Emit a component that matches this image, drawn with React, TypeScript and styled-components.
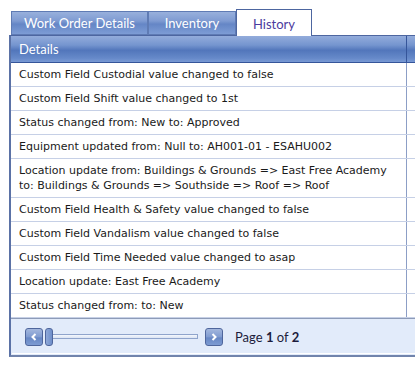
import React from 'react';
import styled, { createGlobalStyle } from 'styled-components';

const GlobalStyle = createGlobalStyle`
    html, body {
        margin: 0;
        padding: 0;
        background: #ffffff;
        overflow: hidden;
    }
`;

const rows: string[][] = [
    ['Custom Field Custodial value changed to false'],
    ['Custom Field Shift value changed to 1st'],
    ['Status changed from: New to: Approved'],
    ['Equipment updated from: Null to: AH001-01 - ESAHU002'],
    [
        'Location update from: Buildings & Grounds => East Free Academy',
        'to: Buildings & Grounds => Southside => Roof => Roof',
    ],
    ['Custom Field Health & Safety value changed to false'],
    ['Custom Field Vandalism value changed to false'],
    ['Custom Field Time Needed value changed to asap'],
    ['Location update: East Free Academy'],
    ['Status changed from: to: New'],
];

const tabs = ['Work Order Details', 'Inventory', 'History'];

export default function App() {
    return (
        <>
            <GlobalStyle />
            <Page>
                <TabBar>
                    {tabs.map((t, i) => (
                        <Tab key={t} active={i === 2} wide={i === 0}>
                            {t}
                        </Tab>
                    ))}
                </TabBar>
                <Panel>
                    <HeaderRow>
                        <HeaderCell>Details</HeaderCell>
                        <HeaderCell />
                    </HeaderRow>
                    {rows.map((lines, i) => (
                        <Row key={i}>
                            <Cell>
                                {lines.map((l) => (
                                    <div key={l}>{l}</div>
                                ))}
                            </Cell>
                            <Cell />
                        </Row>
                    ))}
                    <Pager>
                        <PagerInner>
                            <NavButton>
                                <Chevron dir="left" />
                            </NavButton>
                            <Track>
                                <Thumb />
                                <TrackLine />
                            </Track>
                            <NavButton>
                                <Chevron dir="right" />
                            </NavButton>
                            <PageText>
                                Page <b>1</b> of <b>2</b>
                            </PageText>
                        </PagerInner>
                    </Pager>
                </Panel>
            </Page>
        </>
    );
}

function Chevron({ dir }: { dir: 'left' | 'right' }) {
    const d = dir === 'left' ? 'M5.5 2 L2.5 5 L5.5 8' : 'M2.5 2 L5.5 5 L2.5 8';
    return (
        <svg width="8" height="10" viewBox="0 0 8 10">
            <path d={d} fill="none" stroke="#ffffff" strokeWidth="2" />
        </svg>
    );
}

const Page = styled.div`
    padding: 9px 0 0 9px;
    width: 415px;
    box-sizing: border-box;
`;
const TabBar = styled.div`
    display: flex;
    align-items: flex-end;
    height: 26px;
    padding-left: 2px;
`;
const Tab = styled.div<{ active?: boolean; wide?: boolean }>`
    box-sizing: border-box;
    display: flex;
    align-items: center;
    justify-content: center;
    font-family: Lato, 'Noto Sans', sans-serif;
    font-size: 13px;
    width: ${(p) => (p.active ? '76px' : p.wide ? '137px' : '88px')};
    height: ${(p) => (p.active ? '27px' : '24px')};
    margin-bottom: ${(p) => (p.active ? '-1px' : '0')};
    color: ${(p) => (p.active ? '#4b3b9e' : '#ffffff')};
    background: ${(p) =>
        p.active
            ? '#ffffff'
            : 'linear-gradient(#98b0dc 0%, #7f9bd2 40%, #6586c6 55%, #7d9cd5 100%)'};
    border: 1px solid ${(p) => (p.active ? '#4d66a0' : '#5f7bb4')};
    border-bottom: ${(p) => (p.active ? 'none' : '1px solid #5f7bb4')};
    position: relative;
    z-index: ${(p) => (p.active ? 2 : 0)};
    padding-top: ${(p) => (p.active ? '1px' : '0')};
`;
const Panel = styled.div`
    border-left: 2px solid #5b72a6;
    border-top: 1px solid #4d66a0;
    border-bottom: 2px solid #7184ac;
`;
const HeaderRow = styled.div`
    display: grid;
    grid-template-columns: 396px 1fr;
    height: 26px;
    background: linear-gradient(#93acdb 0%, #7595cf 35%, #5276bb 55%, #6689c9 85%, #7899d4 100%);
    border-bottom: 1px solid #35559a;
`;
const HeaderCell = styled.div`
    display: flex;
    align-items: center;
    padding-left: 8px;
    font-family: Lato, 'Noto Sans', sans-serif;
    font-size: 13px;
    color: #ffffff;
    &:first-child {
        border-right: 1px solid #35559a;
    }
`;
const Row = styled.div`
    display: grid;
    grid-template-columns: 396px 1fr;
    border-bottom: 1px solid #c6d0e6;
`;
const Cell = styled.div`
    padding: 4px 8px;
    font-family: 'DejaVu Sans', Verdana, sans-serif;
    font-size: 11px;
    line-height: 15px;
    color: #1a1a1a;
    &:first-child {
        border-right: 1px solid #8c9ec6;
    }
`;
const Pager = styled.div`
    height: 36px;
    border-top: 1px solid #8d9bb8;
    background: #e2ebfa;
`;
const PagerInner = styled.div`
    box-sizing: border-box;
    height: 34px;
    margin: 1px 0 0 1px;
    border-bottom: 1px solid #ffffff;
    display: flex;
    align-items: center;
    padding-left: 13px;
`;
const NavButton = styled.div`
    box-sizing: border-box;
    width: 18px;
    height: 18px;
    border: 1px solid #4f669c;
    border-radius: 3px;
    background: linear-gradient(#a3b7dd 0%, #7f9bd0 50%, #6787c4 55%, #7d9bd2 100%);
    display: flex;
    align-items: center;
    justify-content: center;
`;
const Track = styled.div`
    display: flex;
    align-items: center;
    width: 153px;
    margin: 0 7px 0 2px;
`;
const Thumb = styled.div`
    box-sizing: border-box;
    width: 8px;
    height: 18px;
    border: 1px solid #4f669c;
    border-radius: 3px;
    background: linear-gradient(90deg, #8fa8d8, #6f8fca);
`;
const TrackLine = styled.div`
    flex: 1;
    height: 5px;
    box-sizing: border-box;
    border: 1px solid #8fa4cc;
    border-left: none;
    background: linear-gradient(#f4f7fc, #dbe4f4);
`;
const PageText = styled.div`
    margin-left: 12px;
    font-family: Lato, 'Noto Sans', sans-serif;
    font-size: 13px;
    color: #1c1c3c;
    b {
        font-weight: bold;
    }
`;
